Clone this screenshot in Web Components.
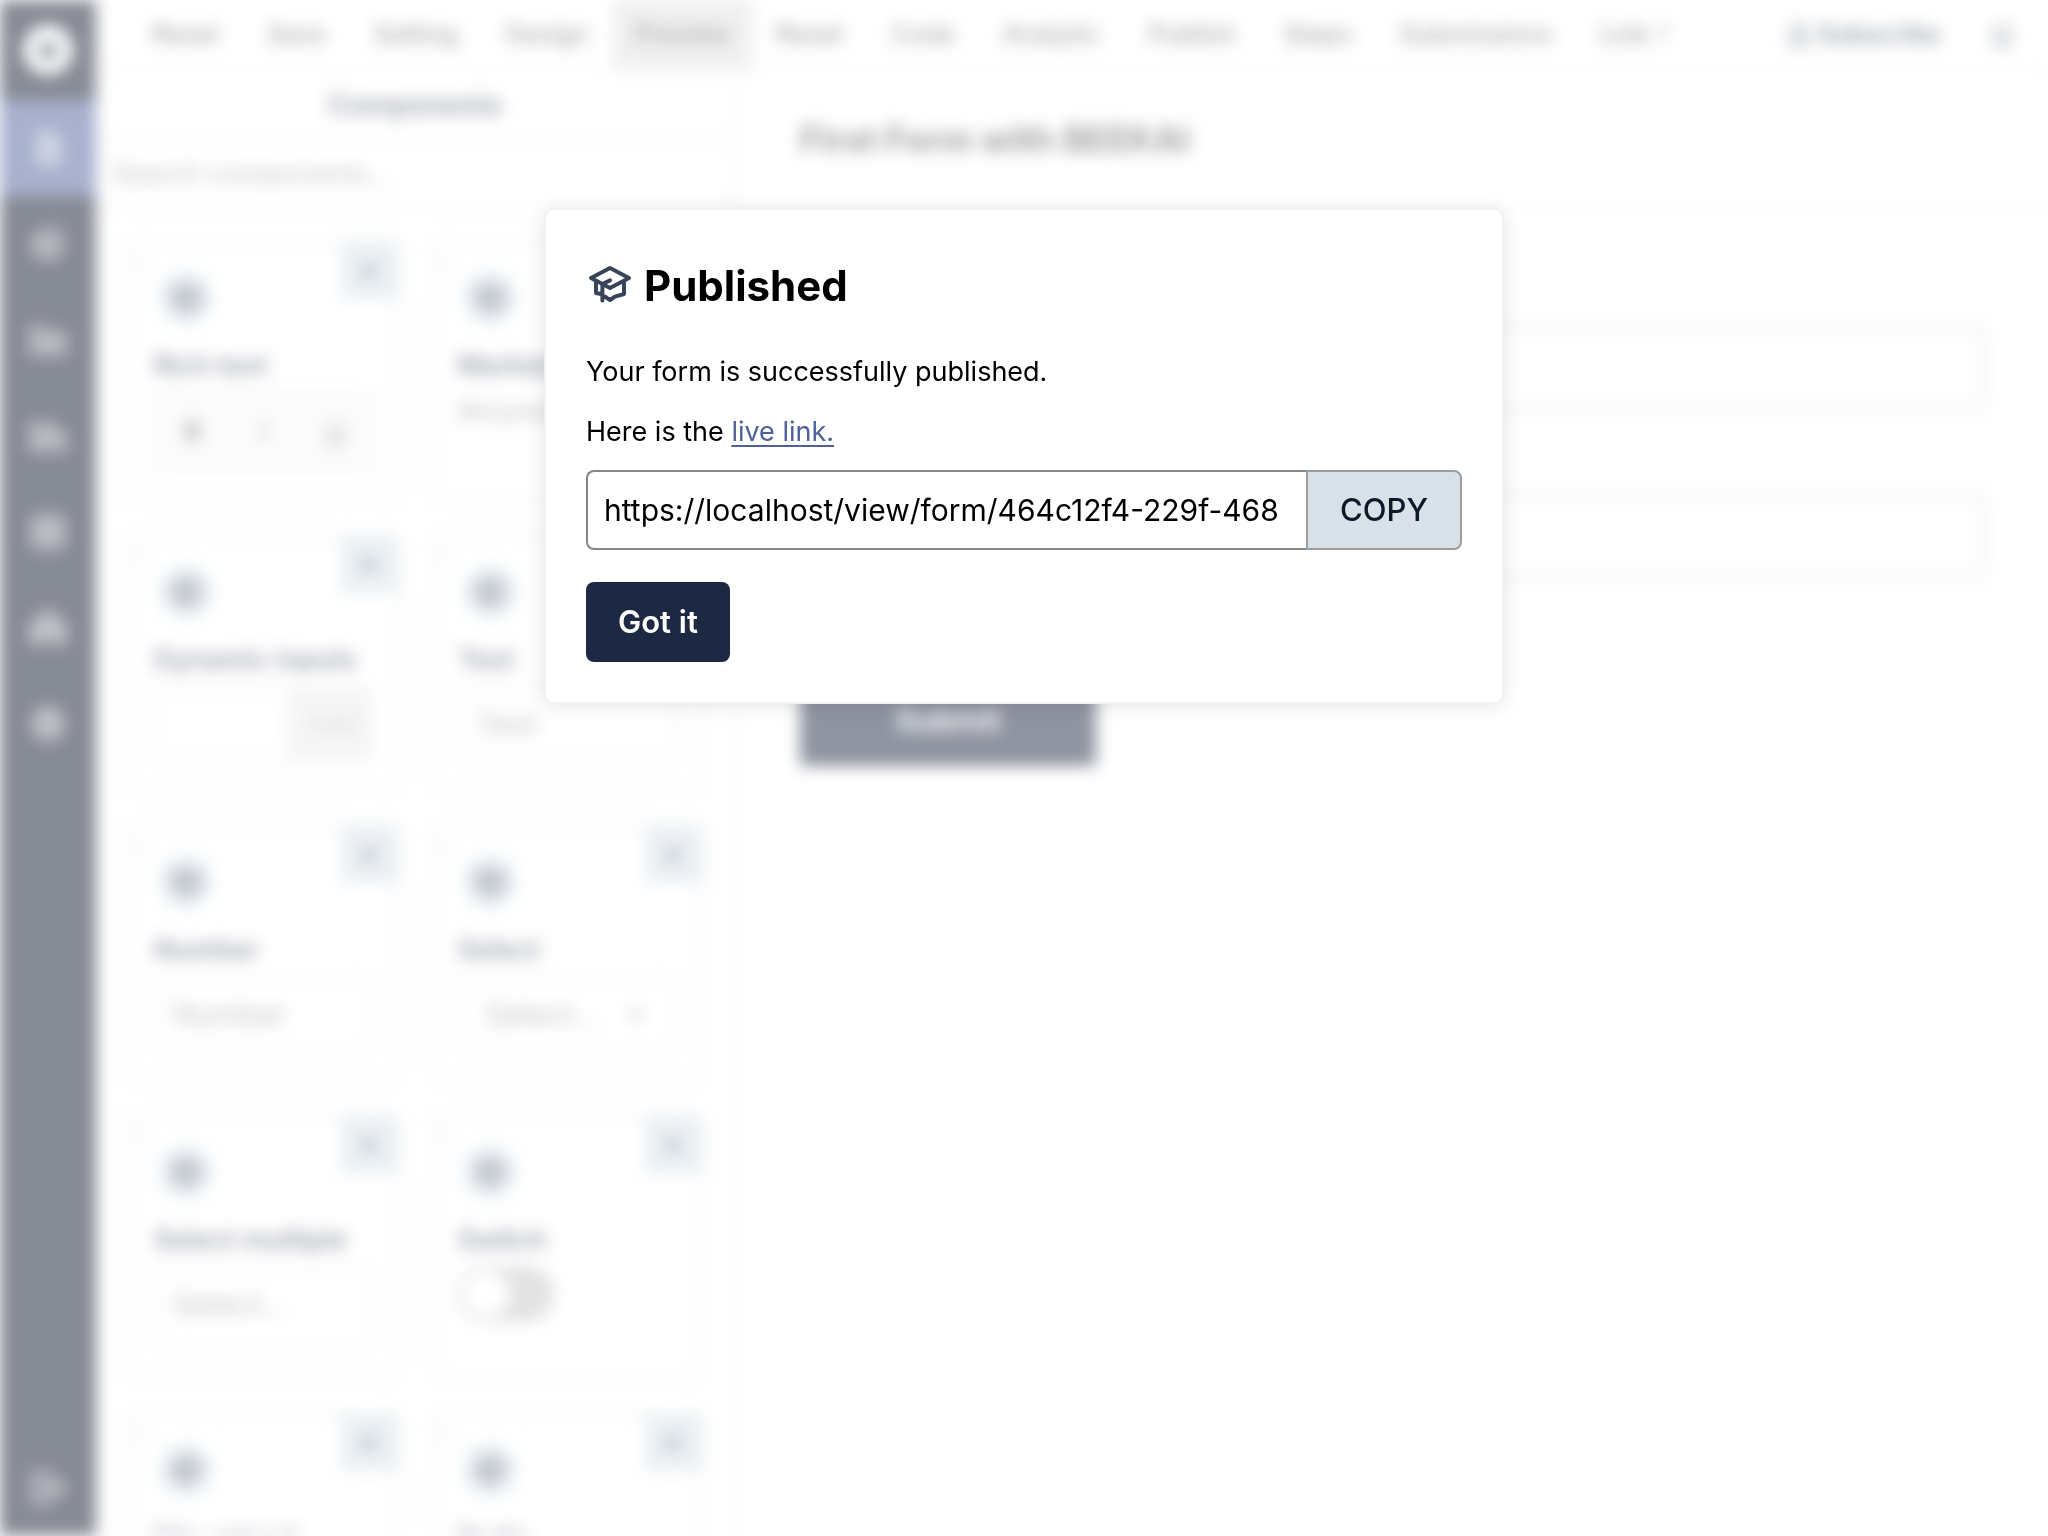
<!DOCTYPE html>
<html lang="en">
<head>
<meta charset="utf-8">
<meta name="viewport" content="width=device-width, initial-scale=1">
<title>Form builder</title>
<style>
  body {
    margin: 0;
    font-family: Inter, "Liberation Sans", sans-serif;
    font-size: 27px;
    color: #000;
    background: #fff;
  }
</style>
</head>
<body>
<form-builder></form-builder>
<publish-dialog href="https://localhost/view/form/464c12f4-229f-468">Your form is successfully published.</publish-dialog>

<script>
const ICONS = {
  logo: '<circle cx="12" cy="12" r="8" stroke-width="7"/><path d="M12 9v4"/>',
  file: '<path fill="currentColor" fill-opacity=".4" d="M6 3h8l5 5v13H6zM14 3v5h5M9 12h6M9 16h6"/>',
  chart: '<path fill="currentColor" fill-opacity=".5" d="M10 4a8.500 8.500 0 1 0 10 10H10z"/><path d="M14 3a8 8 0 0 1 7 7h-7z"/>',
  folderPlus: '<path fill="currentColor" fill-opacity=".5" d="M2 5h7l2 3h11v12H2z"/><path d="M12 11v6M9 14h6"/>',
  folder: '<path fill="currentColor" fill-opacity=".5" d="M2 5h12l2 3h2l4 5v7H2z"/><path d="M6 20l3-8h12"/>',
  table: '<path fill="currentColor" fill-opacity=".4" d="M3 3h18v18H3zM3 9h18M3 15h18M12 3v18"/>',
  team: '<path fill="currentColor" fill-opacity=".6" d="M2 21V11l4-5 4-3h4l4 3 4 5v10h-6v-4H8v4z"/><path d="M6 11h12M6 15h12"/>',
  help: '<circle cx="12" cy="12" r="9" fill="currentColor" fill-opacity=".6"/><path d="M9 9a3 3 0 1 1 3 4v1M12 17v1"/>',
  logout: '<path fill="currentColor" fill-opacity=".3" d="M3 3h8l11 9-11 9H3z"/><path d="M9 12h12"/>',
  user: '<circle cx="12" cy="7" r="4"/><path d="M4 21v-4a4 4 0 0 1 4-4h8a4 4 0 0 1 4 4v4z"/>',
  bell: '<path d="M6 17V11a6 6 0 0 1 12 0v6l2 2H4zM10 21h4"/>',
  external: '<path d="M8 20V10l8-6M10 4h6v6"/>',
  plus: '<path stroke-width="3" d="M12 6v12M6 12h12"/>',
  grip: '<path d="M8 6v1M8 12v1M8 18v1M15 6v1M15 12v1M15 18v1"/>',
  box: '<path fill="currentColor" fill-opacity=".5" d="M12 2l9 5v10l-9 5-9-5V7z"/><path d="M3 7l9 5 9-5M12 12v10"/>',
  down: '<path stroke-width="3" d="M5 9l7 7 7-7"/>',
  cap: '<path d="M12 3l9.500 5-9.500 5-9.500-5z"/><path d="M5 10v5.500l2.500.5M12 9.200L8.200 11v8.300M9.500 17.300l2.500 1.700 2.500-1.700 4.500-1.300V10"/>'
};

class AppIcon extends HTMLElement {
  connectedCallback() {
    this.attachShadow({ mode: 'open' }).innerHTML = `
      <style>
        :host { display: inline-flex; width: var(--size, 40px); height: var(--size, 40px); flex: none; }
        svg { width: 100%; height: 100%; }
      </style>
      <svg viewBox="0 0 24 24" fill="none" stroke="currentColor" stroke-width="2"
        stroke-linecap="round" stroke-linejoin="round" aria-hidden="true">${ICONS[this.getAttribute('name')]}</svg>
    `;
  }
}

class SideRail extends HTMLElement {
  connectedCallback() {
    const items = ['file', 'chart', 'folderPlus', 'folder', 'table', 'team', 'help'];
    this.attachShadow({ mode: 'open' }).innerHTML = `
      <style>
        :host { display: flex; flex-direction: column; flex: none; width: 96px; background: #0e1629; }
        a { display: flex; align-items: center; justify-content: center; height: 96px; color: #e3e6ee; opacity: .7; }
        a.logo { height: 100px; --size: 52px; color: #fff; opacity: 1; }
        a.active { background: #4f619b; opacity: 1; color: #c8cddd; }
        a:last-child { margin-top: auto; }
      </style>
      <a class="logo" href="#" aria-label="Home"><app-icon name="logo"></app-icon></a>
      ${items.map((name, i) => `<a href="#" class="${i ? '' : 'active'}" aria-label="${name}"><app-icon name="${name}"></app-icon></a>`).join('')}
      <a href="#" aria-label="Log out"><app-icon name="logout"></app-icon></a>
    `;
  }
}

class TopMenu extends HTMLElement {
  connectedCallback() {
    const items = ['Reset', 'Save', 'Setting', 'Design', 'Preview', 'Reset', 'Code', 'Analytic', 'Publish', 'Steps', 'Submissions'];
    this.attachShadow({ mode: 'open' }).innerHTML = `
      <style>
        :host { display: flex; align-items: stretch; height: 68px; border-bottom: 2px solid #ebebeb; padding: 0 8px 0 32px; }
        nav { display: flex; flex: 1; }
        button, a {
          display: flex; align-items: center; gap: 4px;
          border: 0; background: none; padding: 0 24px;
          font: 500 25px/32px Inter, sans-serif; color: #555; text-decoration: none;
        }
        button.active { padding: 0 22px; background: #e0e0e0; }
        a { --size: 20px; }
        .account { color: #334155; font-weight: 600; --size: 28px; }
      </style>
      <nav>
        ${items.map(t => `<button class="${t === 'Preview' ? 'active' : ''}">${t}</button>`).join('')}
        <a href="#">Link <app-icon name="external"></app-icon></a>
      </nav>
      <button class="account"><app-icon name="user"></app-icon>Subscribe</button>
      <button class="account" aria-label="Notifications"><app-icon name="bell"></app-icon></button>
    `;
  }
}

class ComponentCard extends HTMLElement {
  connectedCallback() {
    this.attachShadow({ mode: 'open' }).innerHTML = `
      <style>
        :host {
          display: block; position: relative; box-sizing: border-box;
          border: 3px solid #e6e6e6; border-radius: 8px; padding: 27px 23px;
        }
        .add {
          position: absolute; top: 0; right: 0; width: 56px; height: 56px;
          display: flex; align-items: center; justify-content: center;
          border: 0; padding: 0; background: #d6e0e8; color: #475569; --size: 28px;
        }
        .grip { position: absolute; top: 8px; left: 0; color: #b4c0c0; --size: 24px; }
        .badge {
          display: flex; align-items: center; justify-content: center;
          width: 56px; height: 56px; margin-left: 4px; border-radius: 50%;
          background: #dce8f0; color: #646b7c; --size: 36px;
        }
        h3 { margin: 22px 0 8px; font-size: 27px; line-height: 36px; font-weight: 600; color: #3c455c; white-space: nowrap; }
      </style>
      <app-icon class="grip" name="grip"></app-icon>
      <button class="add" aria-label="Add ${this.getAttribute('label')}"><app-icon name="plus"></app-icon></button>
      <div class="badge"><app-icon name="box"></app-icon></div>
      <h3>${this.getAttribute('label')}</h3>
      <slot></slot>
    `;
  }
}

class ComponentPanel extends HTMLElement {
  connectedCallback() {
    this.attachShadow({ mode: 'open' }).innerHTML = `
      <style>
        :host { display: flex; flex-direction: column; flex: none; box-sizing: border-box; width: 640px; border-right: 2px solid #ebebeb; overflow: hidden; }
        h2 { flex: none; margin: 0; height: 70px; box-sizing: border-box; border-bottom: 2px solid #ebebeb; font-size: 28px; line-height: 70px; font-weight: 600; text-align: center; color: #3c455c; }
        input, select { box-sizing: border-box; font: 30px/36px Inter, sans-serif; background: #fff; color: #888; }
        ::placeholder { color: #888; opacity: 1; }
        input[type=search] { flex: none; height: 68px; border: 0; border-bottom: 2px solid #ebebeb; padding: 0 16px; font-size: 27px; }
        .grid { display: grid; grid-template-columns: 1fr 1fr; gap: 32px; padding: 32px 30px 32px 32px; }
        .field { display: block; width: 100%; height: 76px; border: 3px solid #e6e6e6; border-radius: 8px; padding: 0 16px; }
        .tall { height: 84px; padding-bottom: 8px; }
        select.field { appearance: none; padding: 0 24px; }
        .select { display: flex; align-items: center; color: #8a9696; --size: 28px; }
        .select app-icon { margin-left: -56px; }
        .tools { display: flex; height: 80px; box-sizing: border-box; border: 3px solid #e6e6e6; border-radius: 8px; background: #f8f8f8; }
        .tools button { flex: 1; border: 0; padding: 0; background: none; font: 27px/32px Inter, sans-serif; color: #666; }
        .split { display: flex; }
        .split input { flex: 1; min-width: 0; border-radius: 8px 0 0 8px; }
        .split button { width: 84px; border: 0; border-radius: 0 8px 8px 0; background: #ededed; font: 27px/32px Inter, sans-serif; color: #bbb; }
        p { margin: 0; font-size: 27px; line-height: 40px; color: #888; }
        .switch { appearance: none; display: block; margin: 0; width: 96px; height: 56px; border: 4px solid #c6c6c6; border-radius: 28px; background: radial-gradient(circle at 24px 24px, #fff 23px, #c6c6c6 24px); }
      </style>
      <h2>Components</h2>
      <input type="search" placeholder="Search components..." aria-label="Search components">
      <div class="grid">
        <component-card label="Rich text">
          <div class="tools"><button><b>B</b></button><button><i>I</i></button><button><u>U</u></button></div>
        </component-card>
        <component-card label="Markdown"><p>#markdown</p></component-card>
        <component-card label="Dynamic inputs">
          <div class="split"><input class="field" aria-label="Dynamic input"><button>Add</button></div>
        </component-card>
        <component-card label="Text"><input class="field" placeholder="Text" aria-label="Text"></component-card>
        <component-card label="Number"><input class="field" placeholder="Number" aria-label="Number"></component-card>
        <component-card label="Select">
          <div class="select"><select class="field" aria-label="Select"><option>Select...</option></select><app-icon name="down"></app-icon></div>
        </component-card>
        <component-card label="Select multiple"><input class="field tall" placeholder="Select..." aria-label="Select multiple"></component-card>
        <component-card label="Switch"><input class="switch" type="checkbox" role="switch" aria-label="Switch"></component-card>
        <component-card label="File upload"></component-card>
        <component-card label="Radio"></component-card>
      </div>
    `;
  }
}

class FormPreview extends HTMLElement {
  connectedCallback() {
    this.attachShadow({ mode: 'open' }).innerHTML = `
      <style>
        :host { display: block; flex: 1; }
        h1 { margin: 0; padding: 0 64px; border-bottom: 2px solid #ebebeb; font-size: 35px; line-height: 138px; font-weight: 700; color: #444; }
        form { display: flex; flex-direction: column; align-items: flex-start; gap: 84px; padding: 116px 64px; }
        input { box-sizing: border-box; width: 100%; height: 84px; border: 3px solid #c8cccc; border-radius: 8px; padding: 0 16px; font: 30px Inter, sans-serif; }
        button { margin-top: 12px; width: 296px; height: 92px; border: 0; border-radius: 6px; background: #1d2842; color: #fff; font: 600 31px/40px Inter, sans-serif; }
      </style>
      <h1>First Form with BEEKAI</h1>
      <form>
        <input aria-label="First answer">
        <input aria-label="Second answer">
        <button type="button">Submit</button>
      </form>
    `;
  }
}

class FormBuilder extends HTMLElement {
  connectedCallback() {
    this.attachShadow({ mode: 'open' }).innerHTML = `
      <style>
        /* the page is dimmed while the dialog is open */
        :host { display: flex; height: 100vh; overflow: hidden; filter: blur(8px); opacity: .5; }
        .page { display: flex; flex-direction: column; flex: 1; min-width: 0; }
        .work { display: flex; flex: 1; min-height: 0; }
      </style>
      <side-rail></side-rail>
      <div class="page">
        <top-menu></top-menu>
        <div class="work">
          <component-panel></component-panel>
          <form-preview></form-preview>
        </div>
      </div>
    `;
  }
}

class PublishDialog extends HTMLElement {
  connectedCallback() {
    const href = this.getAttribute('href');
    this.attachShadow({ mode: 'open' }).innerHTML = `
      <style>
        :host { position: fixed; inset: 0; display: flex; align-items: flex-start; justify-content: center; padding: 208px 32px 32px; }
        dialog {
          position: static; box-sizing: border-box; margin: 0; padding: 40px;
          width: 100%; max-width: 960px; color: #000; background: #fff;
          border: 2px solid #f1f2f2; border-radius: 10px; box-shadow: 0 2px 20px rgba(0, 0, 0, .1);
        }
        h2 { display: flex; align-items: center; gap: 10px; margin: 0 0 28px; font-size: 42px; line-height: 72px; font-weight: 700; }
        h2 app-icon { --size: 48px; color: #384459; }
        p { margin: 0 0 16px; font-size: 27px; line-height: 44px; }
        a { color: #4f619b; text-underline-offset: 4px; text-decoration-thickness: 2px; }
        .copy { display: flex; margin-bottom: 32px; }
        input, button { box-sizing: border-box; height: 80px; margin: 0; font: 30px/40px Inter, sans-serif; }
        input { flex: 1; min-width: 0; border: 2px solid #868686; border-right: 0; border-radius: 8px 0 0 8px; padding: 0 16px; color: #000; }
        button { padding: 0 32px; border: 0; border-radius: 8px; font-size: 31px; font-weight: 600; background: #1d2842; color: #fff; }
        .copy button { border: 2px solid #9b9d9f; border-radius: 0 8px 8px 0; background: #d9e1e8; color: #0f172a; font-weight: 500; }
      </style>
      <dialog open aria-labelledby="title">
        <h2 id="title"><app-icon name="cap"></app-icon>Published</h2>
        <p><slot></slot></p>
        <p>Here is the <a href="${href}">live link.</a></p>
        <div class="copy">
          <input type="text" readonly aria-label="Live link" value="${href}">
          <button id="copy">COPY</button>
        </div>
        <button id="close">Got it</button>
      </dialog>
    `;
    this.shadowRoot.querySelector('#copy').addEventListener('click', () => {
      navigator.clipboard.writeText(href);
    });
    this.shadowRoot.querySelector('#close').addEventListener('click', () => this.remove());
  }
}

customElements.define('app-icon', AppIcon);
customElements.define('side-rail', SideRail);
customElements.define('top-menu', TopMenu);
customElements.define('component-card', ComponentCard);
customElements.define('component-panel', ComponentPanel);
customElements.define('form-preview', FormPreview);
customElements.define('form-builder', FormBuilder);
customElements.define('publish-dialog', PublishDialog);
</script>
</body>
</html>
